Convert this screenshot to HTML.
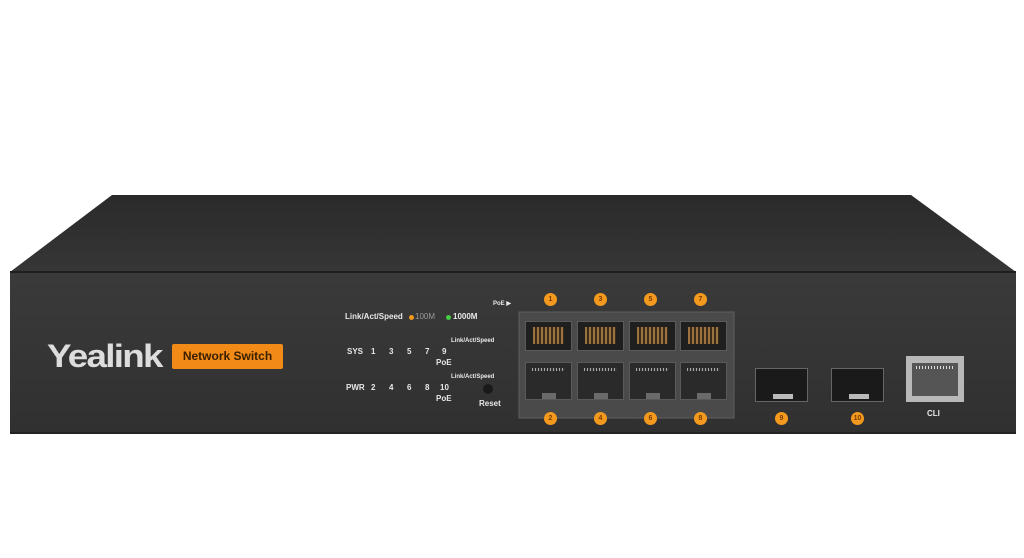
<!DOCTYPE html>
<html><head><style>
*{margin:0;padding:0;box-sizing:border-box}
body{width:1024px;height:558px;background:#fff;position:relative;overflow:hidden;font-family:"Liberation Sans",sans-serif}
.a{position:absolute}
.t{position:absolute;color:#e8e8e8;font-size:8px;font-weight:bold;white-space:nowrap}
.c{position:absolute;width:13px;height:13px;border-radius:50%;background:#f39a1e;color:#7a3c00;font-size:7px;font-weight:bold;text-align:center;line-height:13px}
.pt{position:absolute;width:47px;height:30px;background:#1f1f1f;border:1px solid #5a5a5a}
.pt i{position:absolute;left:7px;right:7px;top:5px;bottom:6px;background:repeating-linear-gradient(90deg,#9a7340 0 2px,#3a2a18 2px 4px)}
.pb{position:absolute;width:47px;height:38px;background:#2a2a2a;border:1px solid #5a5a5a}
.pb i{position:absolute;left:6px;right:6px;top:5px;height:3px;background:repeating-linear-gradient(90deg,#aaa 0 1px,#333 1px 3px)}
.pb b{position:absolute;left:16px;bottom:0;width:14px;height:6px;background:#6a6a6a}
.s{position:absolute;width:53px;height:34px;background:#1a1a1a;border:1px solid #666}
.s b{position:absolute;left:17px;bottom:2px;width:20px;height:5px;background:#bbb}
</style></head><body>
<svg class="a" style="left:0;top:0" width="1024" height="558">
<defs><linearGradient id="g" x1="0" y1="0" x2="0" y2="1"><stop offset="0" stop-color="#2a2a2a"/><stop offset="1" stop-color="#363636"/></linearGradient>
<linearGradient id="f" x1="0" y1="0" x2="0" y2="1"><stop offset="0" stop-color="#3a3a3a"/><stop offset="1" stop-color="#303030"/></linearGradient></defs>
<polygon points="112,195 911,195 1016,272 10,272" fill="url(#g)"/>
<rect x="10" y="271" width="1006" height="2" fill="#1e1e1e"/>
<rect x="10" y="273" width="1006" height="161" fill="url(#f)"/>
<rect x="10" y="432" width="1006" height="2" fill="#222"/>
<rect x="519" y="312" width="215" height="106" fill="#4a4a4a" stroke="#5e5e5e"/>
</svg>
<div class="t" style="left:47px;top:338px;font-size:32px;color:#ddd;letter-spacing:-1.5px;transform:scaleX(1.15);transform-origin:left">Yealink</div>
<div class="a" style="left:172px;top:344px;width:111px;height:25px;background:#f28a17;border-radius:2px;color:#3a2000;font-size:12px;font-weight:bold;text-align:center;line-height:25px">Network Switch</div>
<div class="t" style="left:345px;top:312px">Link/Act/Speed</div>
<div class="a" style="left:409px;top:315px;width:5px;height:5px;border-radius:50%;background:#f39a1e"></div>
<div class="t" style="left:415px;top:312px;color:#999;font-weight:normal">100M</div>
<div class="a" style="left:446px;top:315px;width:5px;height:5px;border-radius:50%;background:#4c4"></div>
<div class="t" style="left:453px;top:312px">1000M</div>
<div class="t" style="left:493px;top:300px;font-size:6px">PoE ▶</div>
<div class="t" style="left:347px;top:347px">SYS</div>
<div class="t" style="left:371px;top:347px">1</div><div class="t" style="left:389px;top:347px">3</div><div class="t" style="left:407px;top:347px">5</div><div class="t" style="left:425px;top:347px">7</div><div class="t" style="left:442px;top:347px">9</div>
<div class="t" style="left:436px;top:358px">PoE</div>
<div class="t" style="left:451px;top:338px;font-size:6px">Link/Act/Speed</div>
<div class="t" style="left:346px;top:383px">PWR</div>
<div class="t" style="left:371px;top:383px">2</div><div class="t" style="left:389px;top:383px">4</div><div class="t" style="left:407px;top:383px">6</div><div class="t" style="left:425px;top:383px">8</div><div class="t" style="left:440px;top:383px">10</div>
<div class="t" style="left:436px;top:394px">PoE</div>
<div class="t" style="left:451px;top:374px;font-size:6px">Link/Act/Speed</div>
<div class="a" style="left:483px;top:384px;width:10px;height:10px;border-radius:50%;background:#1a1a1a"></div>
<div class="t" style="left:479px;top:399px">Reset</div>
<div class="c" style="left:544px;top:293px">1</div><div class="c" style="left:594px;top:293px">3</div><div class="c" style="left:644px;top:293px">5</div><div class="c" style="left:694px;top:293px">7</div>
<div class="c" style="left:544px;top:412px">2</div><div class="c" style="left:594px;top:412px">4</div><div class="c" style="left:644px;top:412px">6</div><div class="c" style="left:694px;top:412px">8</div>
<div class="c" style="left:775px;top:412px">9</div><div class="c" style="left:851px;top:412px">10</div>
<div class="pt" style="left:525px;top:321px"><i></i></div><div class="pt" style="left:577px;top:321px"><i></i></div><div class="pt" style="left:629px;top:321px"><i></i></div><div class="pt" style="left:680px;top:321px"><i></i></div>
<div class="pb" style="left:525px;top:362px"><i></i><b></b></div><div class="pb" style="left:577px;top:362px"><i></i><b></b></div><div class="pb" style="left:629px;top:362px"><i></i><b></b></div><div class="pb" style="left:680px;top:362px"><i></i><b></b></div>
<div class="s" style="left:755px;top:368px"><b></b></div><div class="s" style="left:831px;top:368px"><b></b></div>
<div class="a" style="left:906px;top:356px;width:58px;height:46px;background:#b8b8b8"><div class="a" style="left:6px;top:7px;width:46px;height:33px;background:#555"></div><div class="a" style="left:10px;top:10px;width:38px;height:3px;background:repeating-linear-gradient(90deg,#ddd 0 1px,#555 1px 3px)"></div></div>
<div class="t" style="left:927px;top:409px">CLI</div>
</body></html>
